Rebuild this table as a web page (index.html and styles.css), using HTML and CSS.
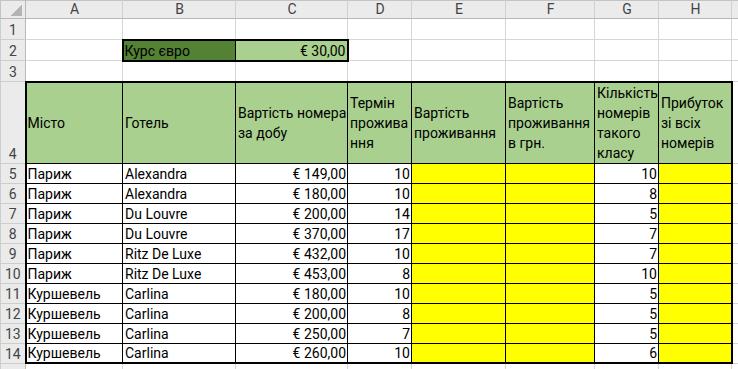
FILE: index.html
```html
<!DOCTYPE html>
<html lang="uk">
<head>
<meta charset="utf-8">
<title>Курс євро</title>
<link rel="stylesheet" href="styles.css">
</head>
<body>
<table class="sheet">
  <colgroup>
    <col class="c-rh"><col class="c-a"><col class="c-b"><col class="c-c"><col class="c-d"><col class="c-e"><col class="c-f"><col class="c-g"><col class="c-h"><col class="c-i">
  </colgroup>
  <tr class="r-hdr">
    <th class="corner"><div class="corner-box"><span class="tri"></span></div></th>
    <th class="colh">A</th><th class="colh">B</th><th class="colh">C</th><th class="colh">D</th><th class="colh">E</th><th class="colh">F</th><th class="colh">G</th><th class="colh">H</th><th class="colh"></th>
  </tr>
  <tr class="r-top">
    <th class="rowh">1</th><td></td><td></td><td></td><td></td><td></td><td></td><td></td><td></td><td></td>
  </tr>
  <tr class="r-top">
    <th class="rowh">2</th><td></td><td class="rate-l">Курс євро</td><td class="rate-r num">€ 30,00</td><td></td><td></td><td></td><td></td><td></td><td></td>
  </tr>
  <tr class="r-top">
    <th class="rowh">3</th><td></td><td></td><td></td><td></td><td></td><td></td><td></td><td></td><td></td>
  </tr>
  <tr class="r-head">
    <th class="rowh">4</th>
    <td class="hd hd-first">Місто</td>
    <td class="hd">Готель</td>
    <td class="hd">Вартість номера<br>за добу</td>
    <td class="hd">Термін<br>прожива<br>ння</td>
    <td class="hd">Вартість<br>проживання</td>
    <td class="hd">Вартість<br>проживання<br>в грн.</td>
    <td class="hd">Кількість<br>номерів<br>такого<br>класу</td>
    <td class="hd hd-last">Прибуток<br>зі всіх<br>номерів</td>
    <td></td>
  </tr>
  <tr class="r-data"><th class="rowh">5</th><td class="dc first">Париж</td><td class="dc">Alexandra</td><td class="dc num">€ 149,00</td><td class="dc num">10</td><td class="dc yel"></td><td class="dc yel"></td><td class="dc num">10</td><td class="dc yel last"></td><td></td></tr>
  <tr class="r-data"><th class="rowh">6</th><td class="dc first">Париж</td><td class="dc">Alexandra</td><td class="dc num">€ 180,00</td><td class="dc num">10</td><td class="dc yel"></td><td class="dc yel"></td><td class="dc num">8</td><td class="dc yel last"></td><td></td></tr>
  <tr class="r-data"><th class="rowh">7</th><td class="dc first">Париж</td><td class="dc">Du Louvre</td><td class="dc num">€ 200,00</td><td class="dc num">14</td><td class="dc yel"></td><td class="dc yel"></td><td class="dc num">5</td><td class="dc yel last"></td><td></td></tr>
  <tr class="r-data"><th class="rowh">8</th><td class="dc first">Париж</td><td class="dc">Du Louvre</td><td class="dc num">€ 370,00</td><td class="dc num">17</td><td class="dc yel"></td><td class="dc yel"></td><td class="dc num">7</td><td class="dc yel last"></td><td></td></tr>
  <tr class="r-data"><th class="rowh">9</th><td class="dc first">Париж</td><td class="dc">Ritz De Luxe</td><td class="dc num">€ 432,00</td><td class="dc num">10</td><td class="dc yel"></td><td class="dc yel"></td><td class="dc num">7</td><td class="dc yel last"></td><td></td></tr>
  <tr class="r-data"><th class="rowh">10</th><td class="dc first">Париж</td><td class="dc">Ritz De Luxe</td><td class="dc num">€ 453,00</td><td class="dc num">8</td><td class="dc yel"></td><td class="dc yel"></td><td class="dc num">10</td><td class="dc yel last"></td><td></td></tr>
  <tr class="r-data"><th class="rowh">11</th><td class="dc first">Куршевель</td><td class="dc">Carlina</td><td class="dc num">€ 180,00</td><td class="dc num">10</td><td class="dc yel"></td><td class="dc yel"></td><td class="dc num">5</td><td class="dc yel last"></td><td></td></tr>
  <tr class="r-data"><th class="rowh">12</th><td class="dc first">Куршевель</td><td class="dc">Carlina</td><td class="dc num">€ 200,00</td><td class="dc num">8</td><td class="dc yel"></td><td class="dc yel"></td><td class="dc num">5</td><td class="dc yel last"></td><td></td></tr>
  <tr class="r-data"><th class="rowh">13</th><td class="dc first">Куршевель</td><td class="dc">Carlina</td><td class="dc num">€ 250,00</td><td class="dc num">7</td><td class="dc yel"></td><td class="dc yel"></td><td class="dc num">5</td><td class="dc yel last"></td><td></td></tr>
  <tr class="r-data r-end"><th class="rowh">14</th><td class="dc first">Куршевель</td><td class="dc">Carlina</td><td class="dc num">€ 260,00</td><td class="dc num">10</td><td class="dc yel"></td><td class="dc yel"></td><td class="dc num">6</td><td class="dc yel last"></td><td></td></tr>
  <tr class="r-tail">
    <th class="rowh"></th><td></td><td></td><td></td><td></td><td></td><td></td><td></td><td></td><td></td>
  </tr>
</table>
</body>
</html>
```
FILE: styles.css
```css
html, body {
  margin: 0;
  padding: 0;
  background: #ffffff;
  overflow: hidden;
}

.sheet {
  border-collapse: collapse;
  table-layout: fixed;
  width: 760px;
  font-family: Roboto, "Liberation Sans", sans-serif;
  font-size: 14px;
  color: #000;
}

.c-rh { width: 25px; }
.c-a { width: 97px; }
.c-b { width: 113px; }
.c-c { width: 112px; }
.c-d { width: 64px; }
.c-e { width: 94px; }
.c-f { width: 89px; }
.c-g { width: 64px; }
.c-h { width: 73px; }
.c-i { width: 29px; }

.sheet td,
.sheet th {
  border: 1px solid #d6d6d6;
  padding: 0 1px 0 2px;
  white-space: nowrap;
  overflow: hidden;
  line-height: 17px;
  vertical-align: bottom;
  font-weight: normal;
  text-align: left;
}

.r-hdr { height: 18px; }
.r-top { height: 21px; }
.r-head { height: 80px; }
.r-data { height: 20px; }
.r-tail { height: 12px; }

.colh {
  background: #ebebeb;
  color: #444;
  text-align: center !important;
  vertical-align: middle !important;
  line-height: 15px !important;
  border-color: #c4c4c4 #d0d0d0 #b8b8b8 #d0d0d0 !important;
}

.rowh {
  background: #ebebeb;
  color: #444;
  text-align: center !important;
  padding: 0 !important;
  border-color: #cdcdcd #b8b8b8 #cdcdcd #cdcdcd !important;
}

.corner {
  background: #ebebeb;
  padding: 0 !important;
  border-color: #c4c4c4 #b8b8b8 #b8b8b8 #c4c4c4 !important;
}

.corner-box {
  display: flex;
  justify-content: flex-end;
  align-items: flex-end;
  height: 17px;
  padding: 0 3px 2px 0;
  box-sizing: border-box;
}

.tri {
  display: block;
  width: 12px;
  height: 11px;
  background: linear-gradient(to bottom right, transparent 50%, #b4b4b4 50%);
}

.rate-l {
  background: #548235;
  padding-left: 1px !important;
  border: 2px solid #000 !important;
  border-right: 1px solid #000 !important;
}

.rate-r {
  background: #a9d08e;
  border: 2px solid #000 !important;
  border-left: 1px solid #000 !important;
}

.num { text-align: right !important; }

.hd {
  background: #a9d08e;
  vertical-align: middle !important;
  line-height: 20px !important;
  border: 1px solid #000 !important;
  border-top: 2px solid #000 !important;
}

.hd-first { border-left: 2px solid #000 !important; padding-left: 1px !important; }
.hd-last { border-right: 2px solid #000 !important; }

.dc { border: 1px solid #000 !important; }
.dc.first { border-left: 2px solid #000 !important; padding-left: 1px !important; }
.dc.last { border-right: 2px solid #000 !important; }
.r-end .dc { border-bottom: 2px solid #000 !important; }

.yel { background: #ffff00; }
```
